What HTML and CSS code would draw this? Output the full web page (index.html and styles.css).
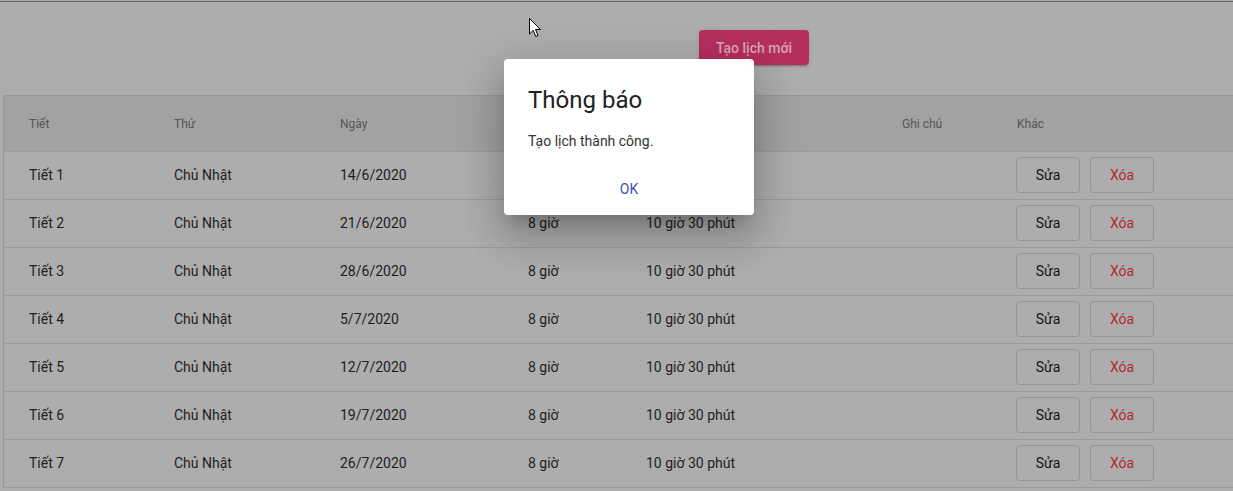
FILE: index.html
```html
<!DOCTYPE html>
<html lang="vi">
<head>
<meta charset="utf-8">
<title>Lịch học</title>
<link rel="stylesheet" href="styles.css">
</head>
<body>
<div class="page">
  <div class="rule"></div>
  <div class="toolbar">
    <button class="btn-create">Tạo lịch mới</button>
  </div>
  <div class="table">
    <div class="row head">
      <div>Tiết</div><div>Thứ</div><div>Ngày</div><div></div><div></div><div>Ghi chú</div><div>Khác</div>
    </div>
    <div class="row"><div>Tiết 1</div><div>Chủ Nhật</div><div>14/6/2020</div><div>8 giờ</div><div>10 giờ 30 phút</div><div></div><div class="actions"><button class="btn-o">Sửa</button><button class="btn-o del">Xóa</button></div></div>
    <div class="row"><div>Tiết 2</div><div>Chủ Nhật</div><div>21/6/2020</div><div>8 giờ</div><div>10 giờ 30 phút</div><div></div><div class="actions"><button class="btn-o">Sửa</button><button class="btn-o del">Xóa</button></div></div>
    <div class="row"><div>Tiết 3</div><div>Chủ Nhật</div><div>28/6/2020</div><div>8 giờ</div><div>10 giờ 30 phút</div><div></div><div class="actions"><button class="btn-o">Sửa</button><button class="btn-o del">Xóa</button></div></div>
    <div class="row"><div>Tiết 4</div><div>Chủ Nhật</div><div>5/7/2020</div><div>8 giờ</div><div>10 giờ 30 phút</div><div></div><div class="actions"><button class="btn-o">Sửa</button><button class="btn-o del">Xóa</button></div></div>
    <div class="row"><div>Tiết 5</div><div>Chủ Nhật</div><div>12/7/2020</div><div>8 giờ</div><div>10 giờ 30 phút</div><div></div><div class="actions"><button class="btn-o">Sửa</button><button class="btn-o del">Xóa</button></div></div>
    <div class="row"><div>Tiết 6</div><div>Chủ Nhật</div><div>19/7/2020</div><div>8 giờ</div><div>10 giờ 30 phút</div><div></div><div class="actions"><button class="btn-o">Sửa</button><button class="btn-o del">Xóa</button></div></div>
    <div class="row"><div>Tiết 7</div><div>Chủ Nhật</div><div>26/7/2020</div><div>8 giờ</div><div>10 giờ 30 phút</div><div></div><div class="actions"><button class="btn-o">Sửa</button><button class="btn-o del">Xóa</button></div></div>
  </div>
</div>

<div class="dialog" role="dialog">
  <h2 class="dialog-title">Thông báo</h2>
  <p class="dialog-text">Tạo lịch thành công.</p>
  <div class="dialog-actions"><button class="btn-ok">OK</button></div>
</div>

<svg class="cursor" width="14" height="22" viewBox="0 0 14 22">
  <path d="M1.5 1.5 L1.5 17 L5.2 13.4 L7.8 19.5 L10 18.5 L7.5 12.5 L12.5 12.5 Z" fill="#fff" stroke="#000" stroke-width="1" stroke-linejoin="miter"/>
</svg>
</body>
</html>
```

FILE: styles.css
```css
* { box-sizing: border-box; }
html, body { margin: 0; padding: 0; }
body {
  font-family: Roboto, "Noto Sans", "Liberation Sans", sans-serif;
  background: #adadad;
  width: 1233px;
  height: 491px;
  overflow: hidden;
  position: relative;
}
.page { background: #adadad; }
.rule { height: 1px; margin-top: 1px; background: #666; }
.toolbar {
  height: 93px;
  padding: 28px 0 0 699px;
}
.btn-create {
  width: 110px;
  height: 35px;
  border: 0;
  border-radius: 4px;
  background: #b52f5e;
  color: #dba4b7;
  font-family: inherit;
  font-size: 14px;
  font-weight: 500;
  box-shadow: 0 3px 1px -2px rgba(0,0,0,.14), 0 2px 2px 0 rgba(0,0,0,.1), 0 1px 5px 0 rgba(0,0,0,.08);
  padding: 0;
}
.table {
  margin-left: 3px;
  border-left: 1px solid #999;
  border-top: 1px solid #999;
}
.row {
  display: grid;
  grid-template-columns: 145px 166px 188px 118px 256px 115px 1fr;
  align-items: center;
  padding-left: 25px;
  padding-bottom: 1px;
  height: 48px;
  border-bottom: 1px solid #9b9b9b;
  font-size: 14px;
  color: #1e1e1e;
}
.row.head {
  height: 56px;
  padding-bottom: 0;
  background: #a2a2a2;
  font-size: 12px;
  color: #555;
}
.actions { display: flex; gap: 10px; margin-left: -1px; }
.btn-o {
  width: 64px;
  height: 36px;
  border: 1px solid #959595;
  border-radius: 4px;
  background: transparent;
  font-family: inherit;
  font-size: 14px;
  font-weight: 400;
  color: #141414;
  padding: 0;
}
.btn-o.del { color: #b8282c; }

.dialog {
  position: absolute;
  left: 504px;
  top: 59px;
  width: 250px;
  height: 156px;
  background: #fff;
  border-radius: 4px;
  padding: 25px 24px 0 24px;
  box-shadow: 0 11px 15px -7px rgba(0,0,0,.2), 0 24px 38px 3px rgba(0,0,0,.14), 0 9px 46px 8px rgba(0,0,0,.12);
}
.dialog-title {
  margin: 0;
  font-size: 24px;
  line-height: 32px;
  font-weight: 400;
  color: #212121;
}
.dialog-text {
  margin: 15px 0 0;
  font-size: 14px;
  line-height: 20px;
  color: #333;
}
.dialog-actions {
  display: flex;
  justify-content: center;
  margin-top: 20px;
}
.btn-ok {
  height: 36px;
  min-width: 64px;
  border: 0;
  background: transparent;
  color: #3f51b5;
  font-family: inherit;
  font-size: 14px;
  font-weight: 400;
  padding: 0 8px;
}
.cursor {
  position: absolute;
  left: 528px;
  top: 17px;
}
```
